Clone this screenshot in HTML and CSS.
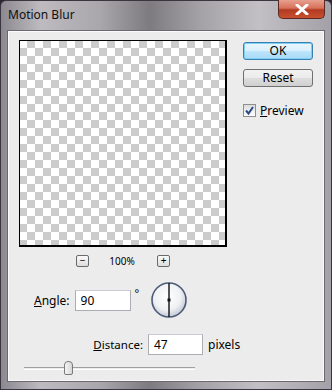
FILE: index.html
```html
<!DOCTYPE html>
<html lang="en">
<head>
  <meta charset="UTF-8" />
  <title>Motion Blur</title>
  <link rel="stylesheet" href="styles.css">
</head>
<body>
  <div class="window">
    <div class="titlebar">
      <span class="title">Motion Blur</span>
      <button class="close-btn" type="button">
        <svg width="14" height="11" viewBox="0 0 14 11">
          <path d="M2 1 L12 10 M12 1 L2 10" stroke="#fff" stroke-width="3" stroke-linecap="round"/>
        </svg>
      </button>
    </div>

    <div class="client">
      <div class="top-row">
        <div class="preview-col">
          <div class="preview"></div>
          <div class="zoom-row">
            <span class="zoom-btn">&minus;</span>
            <span class="zoom-value">100%</span>
            <span class="zoom-btn">+</span>
          </div>
        </div>
        <div class="button-col">
          <button class="btn btn-default" type="button">OK</button>
          <button class="btn" type="button">Reset</button>
          <label class="check">
            <span class="checkbox">
              <svg width="11" height="11" viewBox="0 0 11 11">
                <path d="M2 5.5 L4.5 8.5 L9 2" stroke="#2b4a8a" stroke-width="2" fill="none"/>
              </svg>
            </span>
            <span><u>P</u>review</span>
          </label>
        </div>
      </div>

      <div class="angle-row">
        <span class="field-label"><u>A</u>ngle:</span>
        <input class="field" type="text" value="90">
        <span class="degree">&deg;</span>
        <svg class="dial" width="38" height="38" viewBox="0 0 38 38">
          <defs>
            <radialGradient id="dialFill" cx="45%" cy="40%" r="65%">
              <stop offset="0" stop-color="#ffffff"/>
              <stop offset="0.6" stop-color="#f0f1f4"/>
              <stop offset="1" stop-color="#b9bfcc"/>
            </radialGradient>
          </defs>
          <circle cx="19" cy="19" r="17" fill="url(#dialFill)" stroke="#4d5a78" stroke-width="1.6"/>
          <line x1="19" y1="2" x2="19" y2="36" stroke="#111" stroke-width="1.4"/>
          <rect x="17.5" y="17.5" width="3" height="3" fill="#111"/>
        </svg>
      </div>

      <div class="distance-row">
        <span class="field-label distance-label"><u>D</u>istance:</span>
        <input class="field" type="text" value="47">
        <span class="unit">pixels</span>
      </div>

      <div class="slider">
        <div class="track"></div>
        <div class="thumb"></div>
      </div>
    </div>
  </div>
</body>
</html>
```

FILE: styles.css
```css
body {
  margin: 0;
  font-family: "Noto Sans", "DejaVu Sans", sans-serif;
  font-size: 12px;
  color: #000;
  background: #2a2530;
}
.window {
  width: 332px;
  height: 390px;
  box-sizing: border-box;
  border: 1px solid #3a3540;
  border-radius: 6px 6px 0 0;
  background: linear-gradient(90deg, #8c8890 0%, #bdbbbf 12%, #a9a7ab 30%, #7d7b80 45%, #a3a1a6 60%, #c2c0c4 78%, #a4a0a8 100%);
  display: flex;
  flex-direction: column;
}
.titlebar {
  height: 29px;
  display: flex;
  align-items: flex-start;
  justify-content: space-between;
  padding-left: 7px;
}
.title {
  margin-top: 5px;
  font-size: 12px;
  color: #101010;
}
.close-btn {
  width: 47px;
  height: 19px;
  margin-right: 6px;
  margin-top: -1px;
  border: 1px solid #5a2a22;
  border-top: none;
  border-radius: 0 0 5px 5px;
  background: linear-gradient(#e8a090 0%, #d8705a 45%, #b33a22 55%, #c8502e 100%);
  display: flex;
  align-items: center;
  justify-content: center;
  padding: 0;
}
.client {
  flex: 1;
  margin: 0 6px 7px 6px;
  background: #ececec;
  border: 1px solid #6b6870;
  box-shadow: inset 0 0 0 1px #fafafa;
  padding: 9px 0 0 11px;
}
.top-row {
  display: flex;
}
.preview-col {
  width: 208px;
}
.preview {
  width: 208px;
  height: 207px;
  box-sizing: border-box;
  border: 1px solid #000;
  border-width: 1px 2px 2px 1px;
  background: repeating-conic-gradient(#cccccc 0 25%, #ffffff 0 50%) -1px -1px / 16px 16px;
}
.zoom-row {
  display: flex;
  align-items: center;
  margin-top: 7px;
  padding-left: 57px;
  font-size: 10px;
}
.zoom-btn {
  width: 11px;
  height: 10px;
  border: 1px solid #6a6a6a;
  border-radius: 2px;
  background: linear-gradient(#fafafa, #dcdcdc);
  font-size: 10px;
  line-height: 9px;
  text-align: center;
}
.zoom-value {
  width: 70px;
  text-align: center;
  margin-left: -2px;
}
.button-col {
  display: flex;
  flex-direction: column;
  margin-left: 16px;
  margin-top: 2px;
  width: 70px;
}
.btn {
  height: 18px;
  width: 70px;
  padding: 0;
  border: 1px solid #707070;
  border-radius: 3px;
  background: linear-gradient(#f2f2f2 0%, #ebebeb 50%, #dddddd 51%, #cfcfcf 100%);
  font-family: inherit;
  font-size: 12px;
  line-height: 14px;
  margin-bottom: 9px;
}
.btn-default {
  border-color: #3c7fb1;
  background: linear-gradient(#eaf6fd 0%, #d9f0fc 50%, #bee6fd 51%, #a7d9f5 100%);
  box-shadow: inset 0 0 0 1px #7ed0f5;
}
.check {
  display: flex;
  align-items: center;
  gap: 4px;
  margin-top: 6px;
  font-size: 12px;
}
.checkbox {
  width: 11px;
  height: 11px;
  border: 1px solid #8e8f8f;
  background: linear-gradient(#dcdcdc, #ffffff);
  display: flex;
}
.angle-row {
  display: flex;
  align-items: center;
  margin-top: 13px;
  padding-left: 15px;
  height: 38px;
}
.field-label {
  font-size: 12px;
}
.field {
  width: 56px;
  height: 21px;
  box-sizing: border-box;
  border: 1px solid #abadb3;
  border-top-color: #c9ccd2;
  background: #fff;
  font-family: inherit;
  font-size: 12px;
  padding: 0 0 0 5px;
  margin-left: 5px;
  outline: none;
}
.degree {
  align-self: flex-start;
  margin: 4px 0 0 4px;
  font-size: 11px;
}
.dial {
  margin-left: 11px;
}
.distance-row {
  display: flex;
  align-items: center;
  margin-top: 15px;
}
.distance-label {
  width: 124px;
  text-align: right;
  font-size: 11.5px;
}
.distance-row .field {
  width: 55px;
  margin-left: 5px;
}
.unit {
  margin-left: 5px;
}
.slider {
  position: relative;
  margin: 5px 0 0 5px;
  width: 171px;
  height: 16px;
}
.track {
  position: absolute;
  left: 0;
  right: 0;
  top: 7px;
  height: 1px;
  border-top: 1px solid #a0a0a0;
  border-bottom: 1px solid #ffffff;
}
.thumb {
  position: absolute;
  left: 40px;
  top: 1px;
  width: 7px;
  height: 12px;
  border: 1px solid #7a7a7a;
  border-radius: 4px 4px 2px 2px;
  background: linear-gradient(90deg, #f5f5f5, #d6d6d6);
}
```
